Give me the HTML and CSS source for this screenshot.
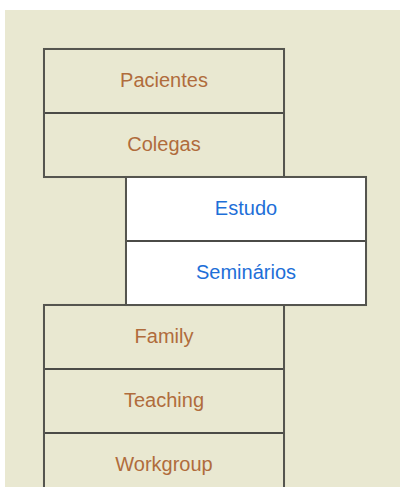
FILE: index.html
```html
<!DOCTYPE html>
<html>
<head>
<meta charset="utf-8">
<link rel="stylesheet" href="styles.css">
</head>
<body>
<div class="panel">
  <div class="group group-left">
    <div class="row brown">Pacientes</div>
    <div class="row brown">Colegas</div>
  </div>
  <div class="group group-right active">
    <div class="row blue">Estudo</div>
    <div class="row blue">Seminários</div>
  </div>
  <div class="group group-left">
    <div class="row brown">Family</div>
    <div class="row brown">Teaching</div>
    <div class="row brown">Workgroup</div>
  </div>
</div>
</body>
</html>
```
FILE: styles.css
```css
html, body {
  margin: 0;
  padding: 0;
  background: #ffffff;
  height: 100%;
  overflow: hidden;
}
.panel {
  margin: 10px 0 0 5px;
  height: calc(100vh - 10px);
  background: #e9e8d1;
  padding: 38px 0 0 38px;
  box-sizing: border-box;
  font-family: "Liberation Sans", Arial, sans-serif;
}
.group {
  width: 238px;
  border: 2px solid #55554f;
  box-shadow: 0 0 0.5px rgba(60,60,55,0.6);
  display: flex;
  flex-direction: column;
  background: #e9e8d1;
}
.group + .group {
  margin-top: -2px;
}
.group-right {
  margin-left: 82px;
  background: #ffffff;
  position: relative;
}
.row {
  height: 62px;
  display: flex;
  align-items: center;
  justify-content: center;
  font-size: 20px;
  padding-bottom: 2px;
  box-sizing: border-box;
}
.row + .row {
  border-top: 2px solid #4b4b47;
  height: 64px;
}
.brown {
  color: #b06c3c;
}
.blue {
  color: #1e6fd8;
}
```
